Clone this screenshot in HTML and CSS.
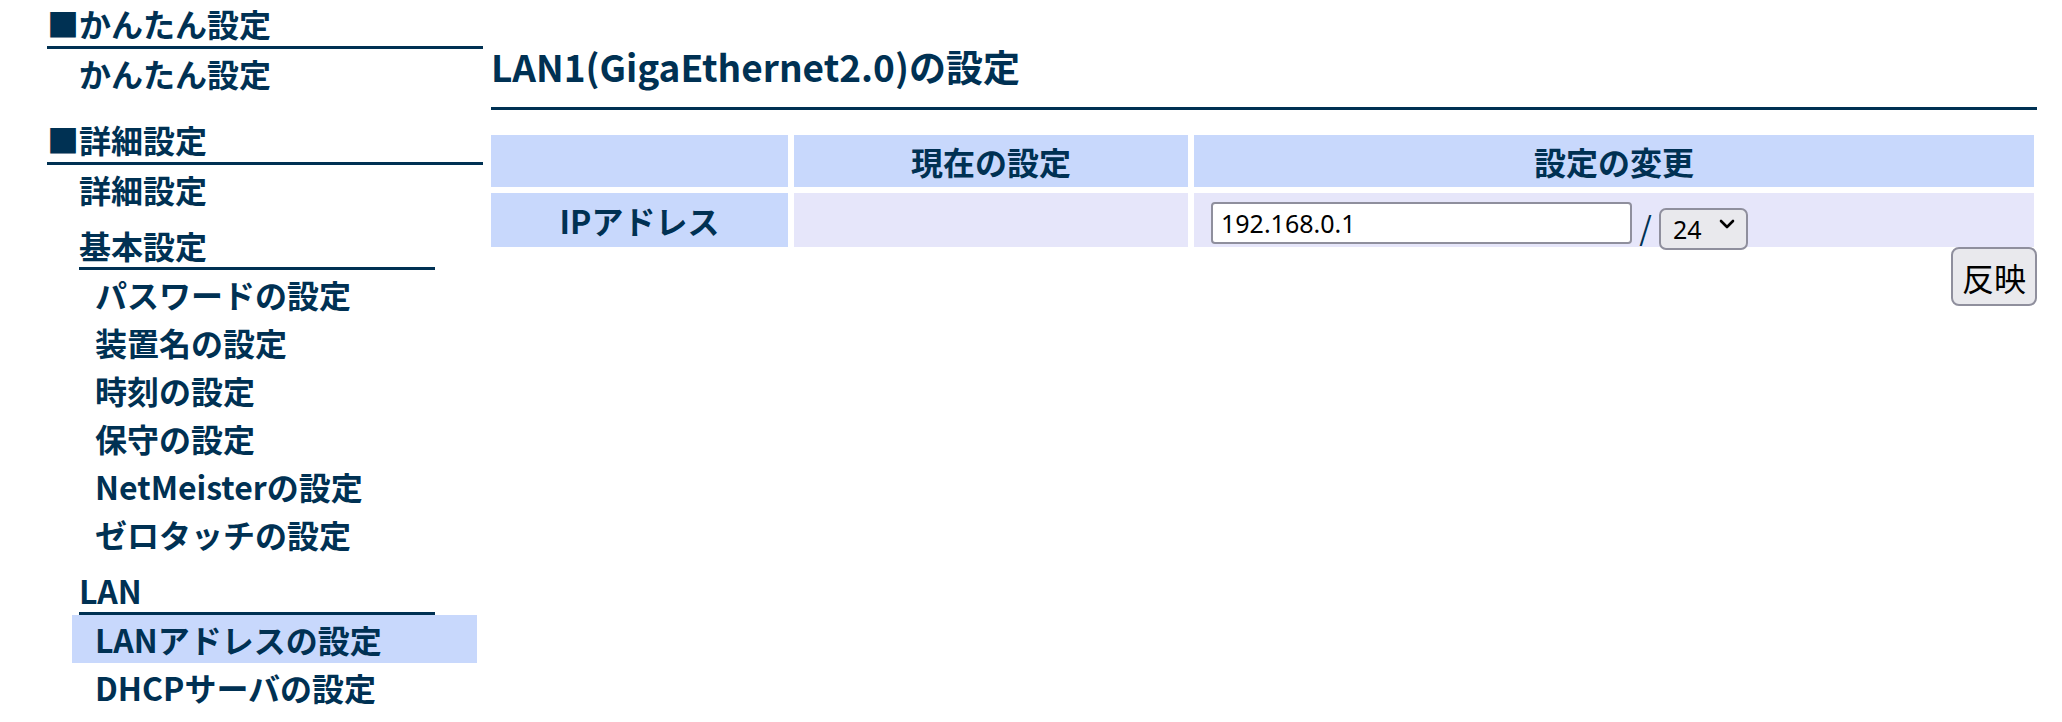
FILE: index.html
```html
<!DOCTYPE html>
<html lang="ja">
<head>
<meta charset="utf-8">
<title>LAN1(GigaEthernet2.0)の設定</title>
<link rel="stylesheet" href="styles.css">
</head>
<body>
<div class="page">
  <nav class="side">
    <div class="grp">
      <div class="h1">■かんたん設定</div>
      <a class="item">かんたん設定</a>
    </div>
    <div class="grp grp-next">
      <div class="h1">■詳細設定</div>
      <a class="item">詳細設定</a>
      <div class="sub">
        <div class="h2">基本設定</div>
        <a class="item2">パスワードの設定</a>
        <a class="item2">装置名の設定</a>
        <a class="item2">時刻の設定</a>
        <a class="item2">保守の設定</a>
        <a class="item2">NetMeisterの設定</a>
        <a class="item2">ゼロタッチの設定</a>
      </div>
      <div class="sub sub-next">
        <div class="h2">LAN</div>
        <a class="item2 active">LANアドレスの設定</a>
        <a class="item2">DHCPサーバの設定</a>
      </div>
    </div>
  </nav>
  <main class="main">
    <h3 class="title">LAN1(GigaEthernet2.0)の設定</h3>
    <div class="tbl">
      <div class="th"></div>
      <div class="th">現在の設定</div>
      <div class="th">設定の変更</div>
      <div class="th rowh">IPアドレス</div>
      <div class="td"></div>
      <div class="td edit">
        <input class="ip" type="text" value="192.168.0.1">
        <span class="slash">/</span>
        <span class="selwrap">
          <select class="mask"><option>24</option></select>
          <svg class="chev" width="16" height="10" viewBox="0 0 16 10"><path d="M2 2 L8 8 L14 2" fill="none" stroke="#000" stroke-width="2.6" stroke-linecap="round" stroke-linejoin="round"/></svg>
        </span>
      </div>
    </div>
    <div class="actions">
      <button class="btn" type="button">反映</button>
    </div>
  </main>
</div>
</body>
</html>
```
FILE: styles.css
```css
html, body {
  margin: 0;
  padding: 0;
  background: #ffffff;
}
body {
  font-family: "Noto Sans CJK JP", "Noto Sans", sans-serif;
  font-weight: 700;
  color: #003153;
  font-size: 32px;
}
.page {
  display: flex;
  align-items: flex-start;
}
.side {
  width: 436px;
  padding-left: 47px;
  display: flex;
  flex-direction: column;
}
.grp {
  display: flex;
  flex-direction: column;
}
.grp-next {
  margin-top: 19px;
}
.h1 {
  height: 46px;
  line-height: 46px;
  border-bottom: 3px solid #003153;
  white-space: nowrap;
}
.item {
  display: block;
  height: 48px;
  line-height: 48px;
  padding-left: 32px;
  white-space: nowrap;
}
.sub {
  display: flex;
  flex-direction: column;
  margin-top: 8px;
}
.h2 {
  margin-left: 32px;
  width: 356px;
  height: 46px;
  line-height: 48px;
  border-bottom: 3px solid #003153;
  white-space: nowrap;
}
.item2 {
  display: block;
  margin-left: 25px;
  width: 382px;
  padding-left: 23px;
  height: 48px;
  line-height: 48px;
  white-space: nowrap;
}
.item2.active {
  background: #c8d8fc;
}
.main {
  margin-left: 8px;
  width: 1546px;
}
.title {
  margin: 39px 0 0 0;
  font-size: 37px;
  line-height: 54px;
  padding-bottom: 14px;
  border-bottom: 3px solid #003153;
  font-weight: 700;
  white-space: nowrap;
}
.tbl {
  display: grid;
  grid-template-columns: 297px 394px 840px;
  grid-template-rows: 52px 54px;
  gap: 6px;
  margin-top: 25px;
}
.th {
  background: #c8d8fc;
  display: flex;
  align-items: center;
  justify-content: center;
  line-height: 46px;
}
.td {
  background: #e6e6fa;
}
.edit {
  display: flex;
  align-items: flex-start;
  padding: 9px 0 0 17px;
}
.ip {
  box-sizing: border-box;
  width: 421px;
  height: 42px;
  margin: 0;
  padding: 0 0 0 8px;
  border: 2px solid #8f8f9d;
  border-radius: 4px;
  background: #fff;
  font-family: "Noto Sans", sans-serif;
  font-weight: 400;
  font-size: 25px;
  color: #000;
  outline: none;
}
.slash {
  width: 27px;
  text-align: center;
  font-weight: 400;
  font-size: 32px;
  line-height: 42px;
  padding-top: 3px;
  color: #003153;
}
.selwrap {
  position: relative;
  display: block;
  width: 89px;
  height: 42px;
}
.mask {
  -webkit-appearance: none;
  appearance: none;
  box-sizing: border-box;
  width: 89px;
  height: 42px;
  margin: 0;
  padding: 0 0 0 12px;
  border: 2px solid #8f8f9d;
  border-radius: 7px;
  background: #e9e9ed;
  font-family: "Noto Sans", sans-serif;
  font-weight: 400;
  font-size: 25px;
  color: #000;
}
.chev {
  position: absolute;
  left: 60px;
  top: 17px;
  pointer-events: none;
}
.actions {
  display: flex;
  justify-content: flex-end;
}
.btn {
  box-sizing: border-box;
  width: 86px;
  height: 59px;
  margin: 0;
  padding: 0;
  border: 2px solid #8f8f9d;
  border-radius: 8px;
  background: #e9e9ed;
  font-family: "Noto Sans CJK JP", sans-serif;
  font-weight: 400;
  font-size: 32px;
  color: #000;
}
```
